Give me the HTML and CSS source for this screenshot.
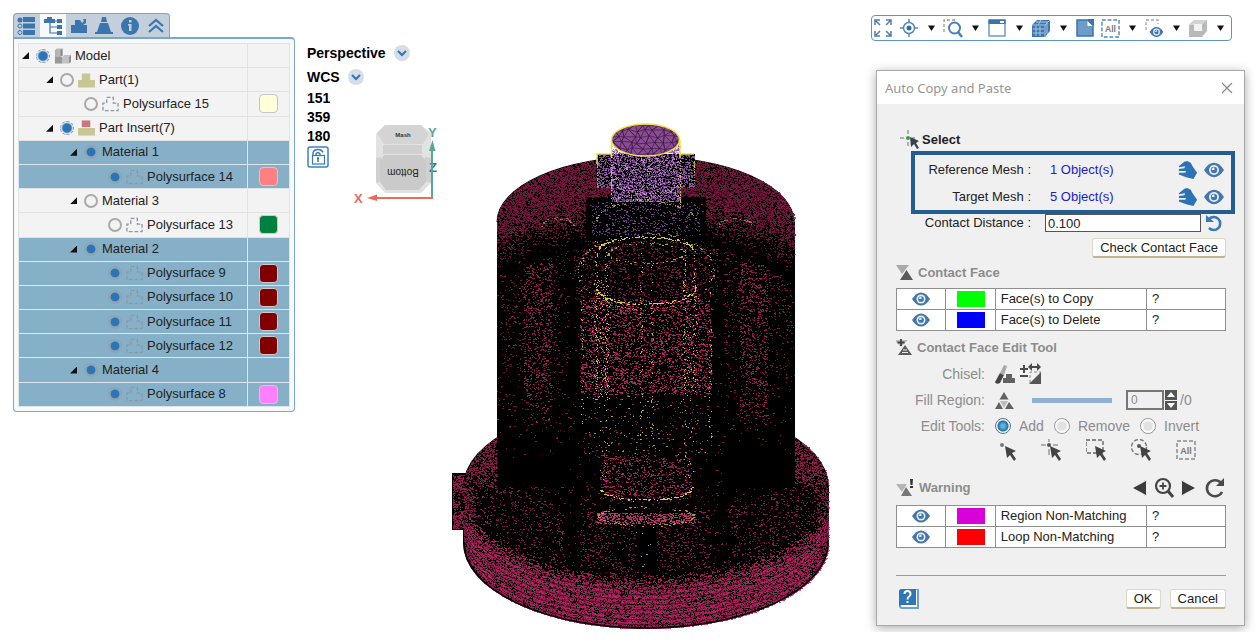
FILE: index.html
```html
<!DOCTYPE html>
<html lang="en">
<head>
<meta charset="utf-8">
<title>Auto Copy and Paste</title>
<link rel="stylesheet" href="styles.css">
</head>
<body>
<svg class="sprite" aria-hidden="true">
  <symbol id="eye" viewBox="0 0 22 16">
    <path d="M0 8Q5 0 11 0t11 8q-5 8-11 8T0 8z" fill="#4377ab"/>
    <circle cx="11" cy="8" r="5.500" fill="#e6edf5"/><circle cx="11" cy="8" r="3.500" fill="#4377ab"/>
    <path d="M8.500 8a3 3 0 0 1 3-3v3z" fill="#e6edf5"/>
  </symbol>
  <symbol id="hand" viewBox="0 0 22 20">
    <path d="M1 6l6-5 3-1 4 2 2 4 5 7-4 7-8-2-8-3v-2h7l1-2-8 0v-2l6-1 1-2-7 1z" fill="#2c73b5"/>
  </symbol>
  <symbol id="surf" viewBox="0 0 18 16">
    <path d="M1 15V7h4V1h7v6h5v8z" fill="none" stroke="#8b98a5" stroke-width="1.4" stroke-dasharray="4 2"/>
  </symbol>
  <symbol id="part" viewBox="0 0 18 16">
    <path d="M0 16V8h4V1h9v7h5v8z" fill="#c9c795"/>
  </symbol>
  <symbol id="insert" viewBox="0 0 18 16">
    <path d="M0 16V8h18v8z" fill="#c9c795"/><path d="M4 0h9v7H4z" fill="#d0747e"/>
  </symbol>
  <symbol id="cubes" viewBox="0 0 18 16">
    <path d="M1 2l2-2h6v8l-2 1H1z" fill="#b5b5b5"/><path d="M7 2l2-2v8H7z" fill="#888"/>
    <path d="M1 9h8v7H1z" fill="#999"/><path d="M9 9l2-2h7v7l-2 2H9z" fill="#c2c2c2"/><path d="M16 9l2-2v7l-2 2z" fill="#8d8d8d"/>
  </symbol>
  <symbol id="down" viewBox="0 0 22 22"><path d="M8 8.500h7l-3.500 5.500z" fill="#111"/></symbol>
  <symbol id="cursor" viewBox="0 0 22 22">
    <path d="M9 7l11 5-4 2 4 6-2 2-4-6-3 3z" fill="#444"/>
  </symbol>
  <symbol id="chev" viewBox="0 0 16 16">
    <circle cx="8" cy="8" r="8" fill="#d5dde7"/><path d="M4 6l4 4 4-4" fill="none" stroke="#3475b5" stroke-width="2"/>
  </symbol>
  <symbol id="all" viewBox="0 0 20 20">
    <path d="M1 1h18v18H1z" fill="none" stroke="currentColor" stroke-width="1.500" stroke-dasharray="4 2"/>
    <text x="10" y="14" text-anchor="middle" class="all-text">All</text>
  </symbol>
</svg>

<main class="app">
  <aside class="browser">
    <nav class="tabs" aria-label="Panels">
      <button class="tab" aria-label="List"><svg width="20" height="20" viewBox="0 0 20 20"><path d="M6 1h12v5H6zM6 7.500h12v5H6zM6 14h12v5H6z" fill="#3b75ae"/><circle cx="3" cy="4" r="2.500" fill="#3b75ae"/><circle cx="3" cy="10" r="2" fill="none" stroke="#3b75ae"/><circle cx="3" cy="16.500" r="2" fill="none" stroke="#3b75ae"/></svg></button>
      <button class="tab active" aria-label="Tree"><svg width="20" height="20" viewBox="0 0 20 20"><path d="M1 7V3h3V1h5v2h3v4zM14 3h5v4h-5zM14 9h5v4h-5zM14 15h5v4h-5z" fill="#3b75ae"/><path d="M7 6v11h7M7 11h7M11 5h3" fill="none" stroke="#3b75ae" stroke-width="1.200"/></svg></button>
      <button class="tab" aria-label="Parts"><svg width="20" height="20" viewBox="0 0 20 20"><path d="M2 17V9h4V4h5l2 3 2-2-1-2h3v4l-3 2h4v8z" fill="#3b75ae"/></svg></button>
      <button class="tab" aria-label="Display"><svg width="20" height="20" viewBox="0 0 20 20"><path d="M8 1h4l1 5H7zM6 7h8l3 9h2v2H1v-2h2z" fill="#3b75ae"/></svg></button>
      <button class="tab" aria-label="Information"><svg width="20" height="20" viewBox="0 0 20 20"><circle cx="10" cy="10" r="9" fill="#3b75ae"/><path d="M9 4h2.500v2.500H9zM8 8h3.500v7H9V9.500H8z" fill="#c3d0dc"/></svg></button>
      <button class="tab" aria-label="Collapse"><svg width="20" height="20" viewBox="0 0 20 20"><path d="M3 10l7-6 7 6M3 16l7-6 7 6" fill="none" stroke="#3b75ae" stroke-width="2.200"/></svg></button>
    </nav>
    <div class="tree-box">
      <table class="tree">
        <tbody>
        <tr><td><div class="node l0"><button class="exp" aria-label="Toggle"></button><input type="checkbox" id="n0" class="partial" checked><svg class="ic"><use href="#cubes"/></svg><label for="n0">Model</label></div></td><td></td></tr>
        <tr><td><div class="node l1"><button class="exp" aria-label="Toggle"></button><input type="checkbox" id="n1"><svg class="ic"><use href="#part"/></svg><label for="n1">Part(1)</label></div></td><td></td></tr>
        <tr><td><div class="node l2"><i class="noexp"></i><input type="checkbox" id="n2"><svg class="ic"><use href="#surf"/></svg><label for="n2">Polysurface 15</label></div></td><td><i class="chip cream"></i></td></tr>
        <tr><td><div class="node l1"><button class="exp" aria-label="Toggle"></button><input type="checkbox" id="n3" class="partial" checked><svg class="ic"><use href="#insert"/></svg><label for="n3">Part Insert(7)</label></div></td><td></td></tr>
        <tr class="sel"><td><div class="node l2"><button class="exp" aria-label="Toggle"></button><input type="checkbox" id="n4" checked><label for="n4">Material 1</label></div></td><td></td></tr>
        <tr class="sel"><td><div class="node l3"><i class="noexp"></i><input type="checkbox" id="n5" checked><svg class="ic"><use href="#surf"/></svg><label for="n5">Polysurface 14</label></div></td><td><i class="chip coral"></i></td></tr>
        <tr><td><div class="node l2"><button class="exp" aria-label="Toggle"></button><input type="checkbox" id="n6"><label for="n6">Material 3</label></div></td><td></td></tr>
        <tr><td><div class="node l3"><i class="noexp"></i><input type="checkbox" id="n7"><svg class="ic"><use href="#surf"/></svg><label for="n7">Polysurface 13</label></div></td><td><i class="chip green"></i></td></tr>
        <tr class="sel"><td><div class="node l2"><button class="exp" aria-label="Toggle"></button><input type="checkbox" id="n8" checked><label for="n8">Material 2</label></div></td><td></td></tr>
        <tr class="sel"><td><div class="node l3"><i class="noexp"></i><input type="checkbox" id="n9" checked><svg class="ic"><use href="#surf"/></svg><label for="n9">Polysurface 9</label></div></td><td><i class="chip maroon"></i></td></tr>
        <tr class="sel"><td><div class="node l3"><i class="noexp"></i><input type="checkbox" id="n10" checked><svg class="ic"><use href="#surf"/></svg><label for="n10">Polysurface 10</label></div></td><td><i class="chip maroon"></i></td></tr>
        <tr class="sel"><td><div class="node l3"><i class="noexp"></i><input type="checkbox" id="n11" checked><svg class="ic"><use href="#surf"/></svg><label for="n11">Polysurface 11</label></div></td><td><i class="chip maroon"></i></td></tr>
        <tr class="sel"><td><div class="node l3"><i class="noexp"></i><input type="checkbox" id="n12" checked><svg class="ic"><use href="#surf"/></svg><label for="n12">Polysurface 12</label></div></td><td><i class="chip maroon"></i></td></tr>
        <tr class="sel"><td><div class="node l2"><button class="exp" aria-label="Toggle"></button><input type="checkbox" id="n13" checked><label for="n13">Material 4</label></div></td><td></td></tr>
        <tr class="sel"><td><div class="node l3"><i class="noexp"></i><input type="checkbox" id="n14" checked><svg class="ic"><use href="#surf"/></svg><label for="n14">Polysurface 8</label></div></td><td><i class="chip pink"></i></td></tr>
        </tbody>
      </table>
    </div>
  </aside>

  <section class="hud">
    <button class="mode">Perspective <svg width="16" height="16"><use href="#chev"/></svg></button>
    <button class="mode">WCS <svg width="16" height="16"><use href="#chev"/></svg></button>
    <div class="hud-row">
      <div class="angles">
        <span>151</span><span>359</span><span>180</span>
        <button class="plain" aria-label="Lock view"><svg width="22" height="22" viewBox="0 0 22 22"><rect x="1" y="1" width="20" height="20" rx="2" fill="#fff" stroke="#3b82c4" stroke-width="1.500"/><path d="M6 9V6.500Q7 3.500 11 3.500t5 3M9 9V8q2-3 4 0v1" fill="none" stroke="#3b78b0" stroke-width="1.400"/><rect x="5.500" y="9.500" width="12" height="8.500" fill="#fff" stroke="#3b78b0" stroke-width="1.200"/><path d="M11 11v5M10 12.500h2" stroke="#3b78b0" stroke-width="1.500"/></svg></button>
      </div>
      <svg class="gizmo" width="88" height="82" viewBox="352 123 88 82">
        <path d="M386 125h36l10 8v50l-10 10h-36l-9-10v-49z" fill="#e2e2e2"/>
        <path d="M386 125h36l8 9-6 10h-39l-7-11z" fill="#d4d4d4"/>
        <path d="M384 145h39v9h-39zM377 158l5 -1v24l-5 2zM426 157l6 1v25l-6-2z" fill="#d0d0d0"/>
        <path d="M385 155h37l5 6v21l-7 8h-33l-6-8v-21z" fill="#cacaca"/>
        <text x="404" y="137" text-anchor="middle" class="face-back">Mash</text>
        <text x="404" y="175" text-anchor="middle" class="face" transform="rotate(180 404 172)">Bottom</text>
        <text x="430" y="172" class="axis-z">Z</text>
        <path d="M433 198V147" stroke="#58a893" stroke-width="2"/><path d="M430 151l3.500-11 3 11z" fill="#58a893"/>
        <path d="M434 198h-60" stroke="#ea6a5c" stroke-width="2"/><path d="M378 194.500l-10 3.500 10 3z" fill="#ea6a5c"/>
        <text x="429" y="137" class="axis-y">Y</text><text x="355" y="203" class="axis-x">X</text>
      </svg>
    </div>
  </section>

  <section class="viewport"><canvas id="mesh" width="380" height="510" role="img" aria-label="Meshed part"></canvas></section>

  <div class="side">
    <div class="toolbar" role="toolbar" aria-label="View">
      <button aria-label="Fit"><svg viewBox="0 0 22 22"><g fill="none" stroke="#4e7fae" stroke-width="1.500"><path d="M3 8V3h5M3 3l5 5M14 3h5v5M19 3l-5 5M3 14v5h5M3 19l5-5M19 14v5h-5M19 19l-5-5"/></g></svg></button>
      <button class="lead" aria-label="Center"><svg viewBox="0 0 22 22"><circle cx="11" cy="11" r="5.500" fill="none" stroke="#5586b8" stroke-width="1.500"/><circle cx="11" cy="11" r="2.500" fill="#2e6da8"/><path d="M11 2v4M11 16v4M2 11h4M16 11h4" stroke="#5586b8" stroke-width="1.500"/></svg></button>
      <button aria-label="Center options"><svg><use href="#down"/></svg></button>
      <button aria-label="Zoom area"><svg viewBox="0 0 22 22"><path d="M2 15V3h13" fill="none" stroke="#9a9a9a" stroke-width="1.300" stroke-dasharray="3 2"/><circle cx="12.500" cy="11" r="5.500" fill="#fff" stroke="#4a80b5" stroke-width="2"/><path d="M16 15l4 5" stroke="#4a80b5" stroke-width="2.500"/></svg></button>
      <button aria-label="Zoom options"><svg><use href="#down"/></svg></button>
      <button aria-label="Window"><svg viewBox="0 0 22 22"><rect x="3" y="3" width="16" height="16" fill="#fff" stroke="#4a80b5" stroke-width="1.200"/><path d="M2.500 2.500h17V7h-17z" fill="#3d74ab"/><path d="M14 4h4v2h-4z" fill="#fff"/></svg></button>
      <button aria-label="Window options"><svg><use href="#down"/></svg></button>
      <button aria-label="Mesh display"><svg viewBox="0 0 22 22"><path d="M2 8l5-5h13v11l-5 6H2z" fill="#3f78b0"/><path d="M3 12h11M3 16h11M6 9v10M10 9v10M2 8h13l5-5M15 8v12M6 5h12M17 6v11M11 3L8 8" fill="none" stroke="#a9c6e0" stroke-width="1"/></svg></button>
      <button aria-label="Mesh options"><svg><use href="#down"/></svg></button>
      <button aria-label="Sheet"><svg viewBox="0 0 22 22"><path d="M3 3h11l5 5v11H3z" fill="#6f9bc8" stroke="#3d74ab" stroke-width="1.500"/><path d="M14 2h6v6h-6z" fill="#3d74ab"/><path d="M13.500 4v5h5z" fill="#fff"/></svg></button>
      <button class="lead tb-all" aria-label="Select all"><svg class="i18"><use href="#all"/></svg></button>
      <button aria-label="Select options"><svg><use href="#down"/></svg></button>
      <button aria-label="Visibility"><svg viewBox="0 0 22 22"><path d="M3 13V3h12v4" fill="none" stroke="#a5a5a5" stroke-width="1.300" stroke-dasharray="3 2"/><use href="#eye" x="6" y="10" width="15" height="10"/></svg></button>
      <button aria-label="Visibility options"><svg><use href="#down"/></svg></button>
      <button aria-label="Shading"><svg viewBox="0 0 22 22"><path d="M2 8l5-5h13v11l-5 6H2z" fill="#b7b9ba"/><path d="M2 8l5-5h13l-5 5z" fill="#d2d3d4"/><path d="M7 7h8v7H7z" fill="#f3f3f3"/></svg></button>
      <button aria-label="Shading options"><svg><use href="#down"/></svg></button>
    </div>

    <form class="dialog" onsubmit="return false">
      <header class="title"><h1>Auto Copy and Paste</h1><button class="plain" type="button" aria-label="Close"><svg width="12" height="12" viewBox="0 0 12 12"><path d="M1 1l10 10M11 1L1 11" stroke="#888" stroke-width="1.200"/></svg></button></header>
      <div class="body">
        <h2 class="head select"><svg width="22" height="22" viewBox="0 0 22 22"><path d="M1 9h4M9 1v4M13 9h3M9 13v4" stroke="#999" stroke-width="1.500"/><circle cx="9" cy="9" r="2" fill="#35a04a"/><path d="M11 8l9 4-3 2 3 5-2 1-3-5-3 3z" fill="#36424e"/></svg>Select</h2>
        <div class="marked">
          <div class="field"><span class="label">Reference Mesh :</span><output>1 Object(s)</output><button class="plain" type="button" aria-label="Pick reference"><svg class="i20"><use href="#hand"/></svg></button><button class="plain" type="button" aria-label="Show reference"><svg class="i20"><use href="#eye"/></svg></button></div>
          <div class="field"><span class="label">Target Mesh :</span><output>5 Object(s)</output><button class="plain" type="button" aria-label="Pick target"><svg class="i20"><use href="#hand"/></svg></button><button class="plain" type="button" aria-label="Show target"><svg class="i20"><use href="#eye"/></svg></button></div>
        </div>
        <div class="distance"><label for="dist">Contact Distance :</label><input id="dist" type="text" value="0.100"><button class="plain" type="button" aria-label="Reset distance"><svg width="18" height="18" viewBox="0 0 18 18"><path d="M4 5a6.500 6.500 0 1 1 0 9" fill="none" stroke="#3a79b5" stroke-width="2.600"/><path d="M1 1v7h8z" fill="#3a79b5"/></svg></button></div>
        <div class="check"><button class="btn" type="button">Check Contact Face</button></div>

        <h2 class="head"><svg width="18" height="18" viewBox="0 0 18 18"><path d="M0 1h13L6 10z" fill="#aaa"/><path d="M4 16L10.500 6 17 16z" fill="#5c5c5c"/></svg>Contact Face</h2>
        <table class="faces"><tbody>
          <tr><td><svg class="i18"><use href="#eye"/></svg></td><td><i class="swatch lime"></i></td><td>Face(s) to Copy</td><td>?</td></tr>
          <tr><td><svg class="i18"><use href="#eye"/></svg></td><td><i class="swatch blue"></i></td><td>Face(s) to Delete</td><td>?</td></tr>
        </tbody></table>

        <h2 class="head tool"><svg width="18" height="18" viewBox="0 0 18 18"><path d="M-2 1h14L5 8z" fill="#bbb"/><path d="M5 0v7M1.500 3.500h7" stroke="#444" stroke-width="1.800"/><path d="M2 16L9 6l7 10z" fill="#5c5c5c"/><path d="M7 11h4M6 13.500h6" stroke="#eee" stroke-width="1.200"/></svg>Contact Face Edit Tool</h2>
        <div class="opt"><span class="label">Chisel:</span>
          <button class="plain" type="button" aria-label="Chisel"><svg width="22" height="22" viewBox="0 0 22 22"><path d="M0 19L5 10l4 2-4 8q-4 2-5-1z" fill="#444"/><path d="M5 10l4-8 3 1-3 9z" fill="#aaa"/><path d="M8 20v-5h3v-4h6v4h3v5z" fill="#626262"/></svg></button>
          <button class="plain" type="button" aria-label="Adjust"><svg width="22" height="22" viewBox="0 0 22 22"><path d="M0 6h8M4 2v8M0 13h8" stroke="#4a4a4a" stroke-width="2"/><path d="M8 4l4-4v3h5V0l4 4-4 4V5h-5v3z" fill="#4a4a4a"/><path d="M10 20V9h11" fill="none" stroke="#888" stroke-dasharray="3 2"/><path d="M21 9v12H9z" fill="#555"/></svg></button>
        </div>
        <div class="opt"><label class="label" for="fill">Fill Region:</label>
          <button class="plain" type="button" aria-label="Fill"><svg width="22" height="22" viewBox="0 0 22 22"><path d="M9 3l4.500 7.500h-9zM4 13l4 7H0zM14 13l5 7h-9z" fill="#626262"/><path d="M5 12h8l-4 7z" fill="#bdbdbd"/></svg></button>
          <input class="range" id="fill" type="range" value="0">
          <span class="spin"><input type="text" value="0" aria-label="Region number"><span class="arrows"><button type="button" aria-label="Up"><svg width="8" height="5" viewBox="0 0 8 5"><path d="M4 0l4 5H0z" fill="#fff"/></svg></button><button type="button" aria-label="Down"><svg width="8" height="5" viewBox="0 0 8 5"><path d="M0 0h8L4 5z" fill="#fff"/></svg></button></span></span><span>/0</span>
        </div>
        <div class="opt"><span class="label">Edit Tools:</span>
          <span class="radios"><label><input type="radio" name="edit" checked>Add</label><label><input type="radio" name="edit">Remove</label><label><input type="radio" name="edit">Invert</label></span>
        </div>
        <div class="picks">
          <button class="plain" type="button" aria-label="Point"><svg viewBox="0 0 22 22"><circle cx="6" cy="6" r="2" fill="#777"/><use href="#cursor" width="22" height="22"/></svg></button>
          <button class="plain" type="button" aria-label="Cross"><svg viewBox="0 0 22 22"><path d="M0 6h5M8 0v3M12 6h5M8 10v6" stroke="#999" stroke-width="1.500"/><circle cx="8" cy="6" r="2" fill="#555"/><use href="#cursor" width="22" height="22"/></svg></button>
          <button class="plain" type="button" aria-label="Box"><svg viewBox="0 0 22 22"><path d="M0 1h17v13H0z" fill="none" stroke="#666" stroke-width="1.400" stroke-dasharray="4 2"/><use href="#cursor" width="22" height="22"/></svg></button>
          <button class="plain" type="button" aria-label="Circle"><svg viewBox="0 0 22 22"><circle cx="8" cy="8" r="7.500" fill="none" stroke="#777" stroke-width="1.400" stroke-dasharray="4 2"/><circle cx="8" cy="7" r="2" fill="#555"/><use href="#cursor" width="22" height="22"/></svg></button>
          <button class="plain dlg-all" type="button" aria-label="All"><svg class="i20"><use href="#all"/></svg></button>
        </div>

        <h2 class="head warn"><svg width="18" height="18" viewBox="0 0 18 18"><path d="M0 5h11l-5 8z" fill="#b5b5b5"/><path d="M5 17l5-9 6 9z" fill="#777"/><path d="M14 0h3l-.500 6h-2zM14 7h3v2h-3z" fill="#333"/></svg><span>Warning</span>
          <button class="plain" type="button" aria-label="Previous"><svg viewBox="0 0 22 22"><path d="M17 4v14L4 11z" fill="#3c3c3c"/></svg></button>
          <button class="plain" type="button" aria-label="Zoom to"><svg viewBox="0 0 22 22"><circle cx="9" cy="9" r="7" fill="none" stroke="#444" stroke-width="2.200"/><path d="M14 14l5 6" stroke="#444" stroke-width="3"/><path d="M9 5.500v7M5.500 9h7" stroke="#444" stroke-width="1.800"/></svg></button>
          <button class="plain" type="button" aria-label="Next"><svg viewBox="0 0 22 22"><path d="M3 4v14l13-7z" fill="#3c3c3c"/></svg></button>
          <button class="plain" type="button" aria-label="Refresh"><svg viewBox="0 0 22 22"><path d="M17 6a8 8 0 1 0 1 9" fill="none" stroke="#4a4a4a" stroke-width="2.600"/><path d="M20 1v8h-8z" fill="#4a4a4a"/></svg></button>
        </h2>
        <table class="faces"><tbody>
          <tr><td><svg class="i18"><use href="#eye"/></svg></td><td><i class="swatch violet"></i></td><td>Region Non-Matching</td><td>?</td></tr>
          <tr><td><svg class="i18"><use href="#eye"/></svg></td><td><i class="swatch red"></i></td><td>Loop Non-Matching</td><td>?</td></tr>
        </tbody></table>

        <footer class="foot">
          <button class="plain" type="button" aria-label="Help"><svg width="22" height="22" viewBox="0 0 22 22"><path d="M4 1h17v20H4q-3 0-3-3V4q0-3 3-3z" fill="#6da0cd"/><path d="M3 17h15V2h1v17H4q-1 0-1-2z" fill="#fff"/><path d="M1 4q0-3 3-3h14v16H4q-2 0-3 1z" fill="#2f76b5"/><path d="M6.500 6q0-3 3-3t3 3q0 1.500-1.500 2.500T9.500 11.500M9.500 13v2" fill="none" stroke="#fff" stroke-width="2"/></svg></button>
          <button class="btn ok" type="submit">OK</button><button class="btn" type="button">Cancel</button>
        </footer>
      </div>
    </form>
  </div>
</main>
<script src="mesh.js"></script>
</body>
</html>
```
FILE: styles.css
```css
* { box-sizing: border-box; }
body { margin: 0; background: #fff; font: 13px/16px "Liberation Sans", Arial, sans-serif; color: #222; }
button, input { font: inherit; color: inherit; margin: 0; }
button { cursor: pointer; }
svg { display: block; flex: none; }
h1, h2 { margin: 0; }
i { display: block; }
.sprite { position: absolute; width: 0; height: 0; }
.plain { display: block; padding: 0; border: 0; background: none; }
.i18 { width: 18px; height: 18px; }
.i20 { width: 20px; height: 20px; }

.app { display: flex; align-items: flex-start; gap: 12px; padding: 13px 15px 0 13px; }

/* model tree */
.browser { flex: none; width: 282px; }
.tabs { display: flex; width: 157px; border: 1px solid #7ba5cb; border-bottom: 0; border-radius: 4px 4px 0 0; background: #c3d0dc; }
.tab { display: grid; place-items: center; flex: 1; height: 23px; padding: 0; border: 0; background: none; }
.tab.active { background: #f7f8f9; }
.tree-box { padding: 4px; border: 1px solid #7ba5cb; border-top-width: 2px; border-radius: 0 4px 4px 4px; background: #f7f9fb; }
.tree { width: 100%; height: 364px; border-collapse: collapse; table-layout: fixed; }
.tree td { padding: 0; border: 1px solid #e2e2e2; background: #f3f3f3; }
.tree td:last-child { width: 42px; }
.tree .sel td { background: #86b0c8; border-color: #dfe6eb; }
.node { display: flex; align-items: center; gap: 4px; height: 20px; }
.l1 { padding-left: 24px; }
.l2 { padding-left: 48px; }
.l3 { padding-left: 72px; }
.exp, .noexp { flex: none; width: 13px; height: 14px; padding: 0; border: 0; background: none; }
.exp { display: grid; place-items: center; }
.exp::before { content: ""; width: 7px; height: 7px; background: #111; clip-path: polygon(100% 0, 100% 100%, 0 100%); }
.node input { appearance: none; flex: none; width: 14px; height: 14px; border: 2px solid #a9a9ab; border-radius: 50%; }
.node input:checked { background: radial-gradient(circle, #2b75b7 4px, #9aabb8 5px); border-color: #8ea5b4; }
.node input.partial:checked { background: radial-gradient(circle, #2b75b7 4px, #f3f3f3 6px); border: 1px dashed #7f9db8; }
.ic { width: 17px; height: 16px; }
.chip { width: 19px; height: 19px; margin: 0 auto; border: 1px solid #d5c8c8; border-radius: 4px; }
.cream { background: #ffffdc; border-color: #c4c4c0; }
.coral { background: #ff8080; }
.green { background: #00803f; }
.maroon { background: #800000; }
.pink { background: #ff80ff; }

/* view state */
.hud { flex: none; width: 132px; padding-top: 28px; color: #000; font-size: 14px; font-weight: bold; }
.mode { display: flex; align-items: center; gap: 8px; height: 24px; padding: 0; border: 0; background: none; }
.hud-row { display: flex; align-items: flex-start; justify-content: space-between; }
.angles { display: flex; flex-direction: column; line-height: 19px; }
.gizmo { margin-top: 34px; }
.face { font: 10px "Liberation Sans", sans-serif; fill: #222; }
.face-back { font: bold 6px "Liberation Sans", sans-serif; fill: #333; }
.axis-x, .axis-y { font: bold 13px "Liberation Sans", sans-serif; fill: #ea6a5c; }
.axis-y { fill: #58a893; }
.axis-z { font: bold 13px "Liberation Sans", sans-serif; fill: #2b75b7; }

.viewport { flex: 1; min-width: 0; padding-top: 109px; }
.viewport canvas { display: block; }

/* view toolbar */
.side { flex: none; width: 374px; padding-top: 2px; }
.toolbar { display: flex; width: 361px; border: 1px solid #5a93c4; border-radius: 4px; background: #fff; }
.toolbar button { display: grid; place-items: center; width: 22px; height: 24px; padding: 0; border: 0; background: none; }
.toolbar button svg { width: 22px; height: 22px; }
.toolbar .tb-all svg { width: 19px; height: 19px; }
.toolbar .lead { margin-left: 4px; }
.all-text { font: bold 9px "Liberation Sans", sans-serif; fill: #777; }
.tb-all { color: #5586b8; }
.dlg-all { color: #8a8a8a; }

/* dialog */
.dialog { margin: 29px 0 0 5px; border: 1px solid #a8a8a8; background: #f0f0f0; box-shadow: 0 2px 10px #0005; }
.title { display: flex; align-items: center; justify-content: space-between; height: 33px; padding: 0 11px 0 8px; background: #fff; }
.title h1 { font: 13px "Noto Sans", sans-serif; color: #969696; }
.body { padding: 26px 18px 15px 19px; }
.head { display: flex; align-items: center; gap: 4px; height: 26px; font-size: 13px; color: #8c8c8c; }
.head.select { height: 20px; margin-bottom: 1px; padding-left: 3px; gap: 1px; color: #222; }
.head.tool { margin-top: 4px; gap: 3px; }
.marked { margin: 0 -9px 0 15px; padding: 1px 7px 0 0; border: 4px solid #245d92; }
.field { display: flex; align-items: center; gap: 6px; height: 27px; }
.field .label { width: 116px; text-align: right; }
.field output { flex: 1; padding-left: 13px; color: #2218d0; }
.distance { display: flex; align-items: center; gap: 4px; padding-right: 3px; }
.distance label { width: 135px; text-align: right; }
.distance input { flex: 1; min-width: 0; height: 18px; margin-left: 10px; padding: 0 2px; border: 1px solid #555; background: #fff; }
.check { display: flex; justify-content: flex-end; margin: 6px 0 2px; }
.btn { height: 20px; padding: 0 7px; border: 1px solid #ddd8c8; border-bottom: 2px solid #c3b48c; border-radius: 3px; background: #fff; line-height: 16px; }
.faces { width: 100%; margin-top: 2px; border-collapse: collapse; table-layout: fixed; background: #fff; }
.faces td { height: 21px; padding: 0 5px; border: 1px solid #8f8f8f; }
.faces td:nth-child(1), .faces td:nth-child(2) { width: 15%; }
.faces td:nth-child(4) { width: 24%; }
.faces svg { margin: 0 auto; }
.swatch { width: 28px; height: 16px; margin: 0 auto; }
.lime { background: #0f0; }
.blue { background: #00f; }
.violet { background: #d800d8; }
.red { background: #f00; }
.opt { display: flex; align-items: center; height: 26px; gap: 3px; font-size: 14px; color: #8c8c8c; }
.opt .label { width: 89px; margin-right: 7px; text-align: right; }
.range { appearance: none; width: 80px; height: 5px; margin: 0 11px 0 12px; background: #8fb0d3; }
.range::-webkit-slider-thumb { appearance: none; width: 0; height: 0; }
.spin { display: flex; gap: 1px; }
.spin input { width: 38px; height: 20px; padding: 0 3px; border: 2px solid #777; background: #f0f0f0; font-size: 12px; }
.arrows { display: grid; gap: 1px; width: 12px; }
.arrows button { display: grid; place-items: center; min-height: 0; padding: 0; border: 0; background: #555; }
.radios { display: flex; gap: 10px; }
.radios label { display: flex; align-items: center; gap: 8px; }
.radios input { appearance: none; width: 16px; height: 16px; border: 1px solid #999; border-radius: 50%; background: radial-gradient(circle, #e2e2e2 4px, #fff 6px); }
.radios input:checked { border-color: #547a99; background: radial-gradient(circle, #55b1dd 2px, #286c9b 5px, #eef4f8 6px); }
.picks { display: flex; gap: 23px; padding-left: 100px; }
.picks svg { width: 22px; height: 22px; }
.picks .i20 { width: 20px; height: 20px; }
.head.warn { margin-top: 14px; margin-bottom: 4px; gap: 3px; }
.warn span { flex: 1; padding-left: 2px; }
.warn button svg { width: 22px; height: 22px; }
.foot { display: flex; align-items: center; gap: 9px; margin-top: 27px; padding: 12px 0 0 2px; border-top: 1px solid #999; }
.foot .ok { margin-left: auto; }
```
FILE: mesh.js
```javascript
// Draws the dense wireframe of the part: silhouette, mesh speckle, feature edges.
(function () {
  const canvas = document.getElementById("mesh");
  const ctx = canvas.getContext("2d");
  const OX = 451, OY = 122, CX = 645.5;
  let seed = 7;
  const rnd = () => {
    seed = (seed * 1664525 + 1013904223) >>> 0;
    return seed / 4294967296;
  };
  const clamp = (v) => Math.max(0, Math.min(1, v));
  ctx.translate(-OX, -OY);

  // silhouette
  ctx.fillStyle = "#000";
  ctx.fillRect(452, 473, 16, 57);
  ctx.beginPath();
  ctx.ellipse(646, 487, 183, 86, 0, Math.PI, 0);
  ctx.lineTo(829, 543);
  ctx.ellipse(646, 543, 183, 86, 0, 0, Math.PI);
  ctx.fill();
  ctx.fillRect(497, 222, 298, 240);
  ctx.beginPath();
  ctx.ellipse(CX, 222, 149, 66, 0, Math.PI, 0);
  ctx.fill();
  ctx.fillRect(597, 154, 98, 34);

  const inBody = (x, y) => {
    const dx = (x - CX) / 149;
    return Math.abs(dx) < 1 && y < 487 && y > 222 - 66 * Math.sqrt(1 - dx * dx);
  };
  const inBase = (x, y) => {
    const dx = (x - 646) / 183;
    if (Math.abs(dx) >= 1) return false;
    const s = 86 * Math.sqrt(1 - dx * dx);
    return y > 487 - s && y < 543 + s;
  };

  // returns [probability, colour] of a lit facet at a point
  function facet(x, y) {
    const ax = Math.abs(x - CX);
    if (y > 154 && y < 188 && ax > 34 && ax < 49) return [0.5, "#9f60b4"];
    if (ax < 34 && y > 140 && y < 202) return [0.68, rnd() < 0.35 ? "#cf93dd" : "#84489a"];
    if (ax < 54 && y >= 202 && y < 236) return [0.16, "#7a4a94"];
    if (inBody(x, y)) {
      const dx = ax / 149;
      const top = 222 - 66 * Math.sqrt(1 - dx * dx);
      const d = y - top;
      if (y < 275 && d < 84 && !(ax < 60 && y > 196)) {
        return [0.8 * clamp((84 - d) / 50) * clamp((275 - y) / 60), "#7d1742"];
      }
      if (ax < 72 && y > 240 && y < 300) return [0.16, "#8c204a"];
      if (ax < 66 && y >= 300 && y < 395) {
        return [0.26, "#c42a68"];
      }
      if (ax > 94 && ax < 122 && y > 262 && y < 430) return [0.24 * clamp((450 - y) / 80), "#a02254"];
      if (ax > 78 && ax < 146 && y > 250) return [0.1 * clamp((460 - y) / 150), "#8d1c49"];
      if (ax < 66 && y > 395 && y < 455) return [0.05, rnd() < 0.3 ? "#b5ae44" : "#ad2860"];
      if (ax < 46 && y >= 455) return [0.2, "#b82862"];
      return [0.012, "#952452"];
    }
    if (x < 464 && x > 452 && y > 474 && y < 529) return [y < 490 || y > 514 ? 0.7 : 0.4, "#a02055"];
    if (inBase(x, y)) {
      const dx = (x - 646) / 183;
      const s = Math.sqrt(1 - dx * dx);
      const d = 543 + 86 * s - y;
      const e = 183 - Math.abs(x - 646);
      if (y < 487) return [0.6 * clamp((500 - y) / 30), "#94204f"];
      const rim = clamp((58 - d) / 22);
      const side = clamp((20 - e) / 14) * 0.5;
      if (ax < 46 && y < 500) return [0.22, "#b82862"];
      if (ax < 50 && y > 512 && y < 524) return [0.5, "#d23f78"];
      if (y > 522 && ax < 10 && y < 572) return [0.01, "#d8cf40"];
      let inner = d < 115 ? 0.12 : 0.04;
      if (ax > 66 && ax < 82) inner = 0.03;
      return [Math.max(rim * 0.85, side, inner), rim > 0.3 ? "#b82464" : "#94204f"];
    }
    return [0, ""];
  }

  for (let y = 122; y < 632; y++) {
    for (let x = 451; x < 831; x++) {
      const [p, c] = facet(x, y);
      if (p && rnd() < p * 0.8) {
        ctx.fillStyle = c;
        ctx.globalAlpha = 0.65 + rnd() * 0.35;
        ctx.fillRect(x, y, rnd() < 0.3 ? 2 : 1, 1);
      }
    }
  }
  ctx.globalAlpha = 1;

  // rows of element edges on the flange rim
  ctx.strokeStyle = "rgba(0,0,0,.45)";
  ctx.lineWidth = 1;
  for (let k = 0; k < 9; k++) {
    ctx.beginPath();
    ctx.ellipse(646, 539 - k * 5, 183, 86, 0, 0.1, Math.PI - 0.1);
    ctx.stroke();
  }
  ctx.strokeStyle = "#000";
  ctx.lineWidth = 1.5;
  ctx.beginPath();
  ctx.ellipse(646, 543, 182, 85, 0, 0, Math.PI);
  ctx.stroke();

  // top cap of the pin
  ctx.save();
  ctx.beginPath();
  ctx.ellipse(CX, 140, 34, 16, 0, 0, Math.PI * 2);
  ctx.fillStyle = "#8b4c94";
  ctx.fill();
  ctx.clip();
  ctx.strokeStyle = "#3c1c44";
  ctx.lineWidth = 0.7;
  const pts = [];
  for (let r = 0; r < 7; r++) {
    pts.push([]);
    for (let c = 0; c < 11; c++) {
      pts[r].push([608 + c * 8 - (r % 2) * 4 + rnd() * 4, 123 + r * 6 + rnd() * 3]);
    }
  }
  for (let r = 0; r < 6; r++) {
    for (let c = 0; c < 10; c++) {
      const a = pts[r][c], b = pts[r][c + 1], d = pts[r + 1][c], e = pts[r + 1][c + 1];
      ctx.beginPath();
      ctx.moveTo(...b);
      ctx.lineTo(...a);
      ctx.lineTo(...d);
      ctx.lineTo(...(r % 2 ? b : a));
      ctx.lineTo(...e);
      ctx.stroke();
    }
  }
  ctx.restore();

  // highlighted feature edges
  ctx.strokeStyle = "#f0e442";
  ctx.lineWidth = 1.5;
  ctx.beginPath();
  ctx.ellipse(CX, 140, 34, 16, 0, 0, Math.PI * 2);
  ctx.moveTo(611.5, 140);
  ctx.lineTo(611.5, 158);
  ctx.moveTo(680, 140);
  ctx.lineTo(680, 158);
  ctx.moveTo(611, 154);
  ctx.lineTo(597, 154);
  ctx.lineTo(597, 164);
  ctx.moveTo(680, 154);
  ctx.lineTo(694, 154);
  ctx.stroke();

  function arc(cx, cy, rx, ry, a0, a1, density, colour) {
    const n = Math.round(Math.abs(a1 - a0) * rx);
    ctx.fillStyle = colour;
    for (let i = 0; i < n; i++) {
      if (rnd() > density) continue;
      const a = a0 + (a1 - a0) * i / n;
      ctx.fillRect(Math.round(cx + rx * Math.cos(a)), Math.round(cy + ry * Math.sin(a) + rnd() * 2), 1 + Math.round(rnd()), 1);
    }
  }
  function column(x, y0, y1, density, spread) {
    ctx.fillStyle = "#c9c13f";
    for (let y = y0; y < y1; y++) {
      if (rnd() < density) ctx.fillRect(Math.round(x + (rnd() - 0.5) * spread), y, 1, 1);
    }
  }
  const PI = Math.PI;
  arc(CX, 248, 47, 12, PI, 2 * PI, 0.65, "#d6cf3c");
  arc(CX, 252, 38, 10, 0, 2 * PI, 0.2, "#aaa43a");
  arc(CX, 286, 50, 17, 0, PI, 0.55, "#d6cf3c");
  arc(CX, 270, 68, 38, 0, 2 * PI, 0.2, "#9a9434");
  arc(CX, 486, 46, 13, 0, PI, 0.5, "#d6cf3c");
  arc(CX, 515, 48, 9, 0, 2 * PI, 0.25, "#c5863e");
  arc(CX, 220, 50, 20, PI, 2 * PI, 0.2, "#a8a13b");
  arc(557, 224, 16, 7, PI, 2 * PI, 0.4, "#a26a5a");
  arc(735, 224, 16, 7, PI, 2 * PI, 0.4, "#a26a5a");
  [597, 694].forEach((x) => column(x, 158, 188, 0.5, 1));
  [611, 680].forEach((x) => column(x, 160, 205, 0.6, 1));
  [596, 606, 684, 694].forEach((x) => column(x, 240, 395, 0.3, 3));
  [582, 641, 652, 710].forEach((x) => column(x, 250, 440, 0.18, 3));
  [600, 602, 690].forEach((x) => column(x, 280, 400, 0.5, 16));
  [604, 688].forEach((x) => column(x, 395, 480, 0.2, 10));
})();
```
